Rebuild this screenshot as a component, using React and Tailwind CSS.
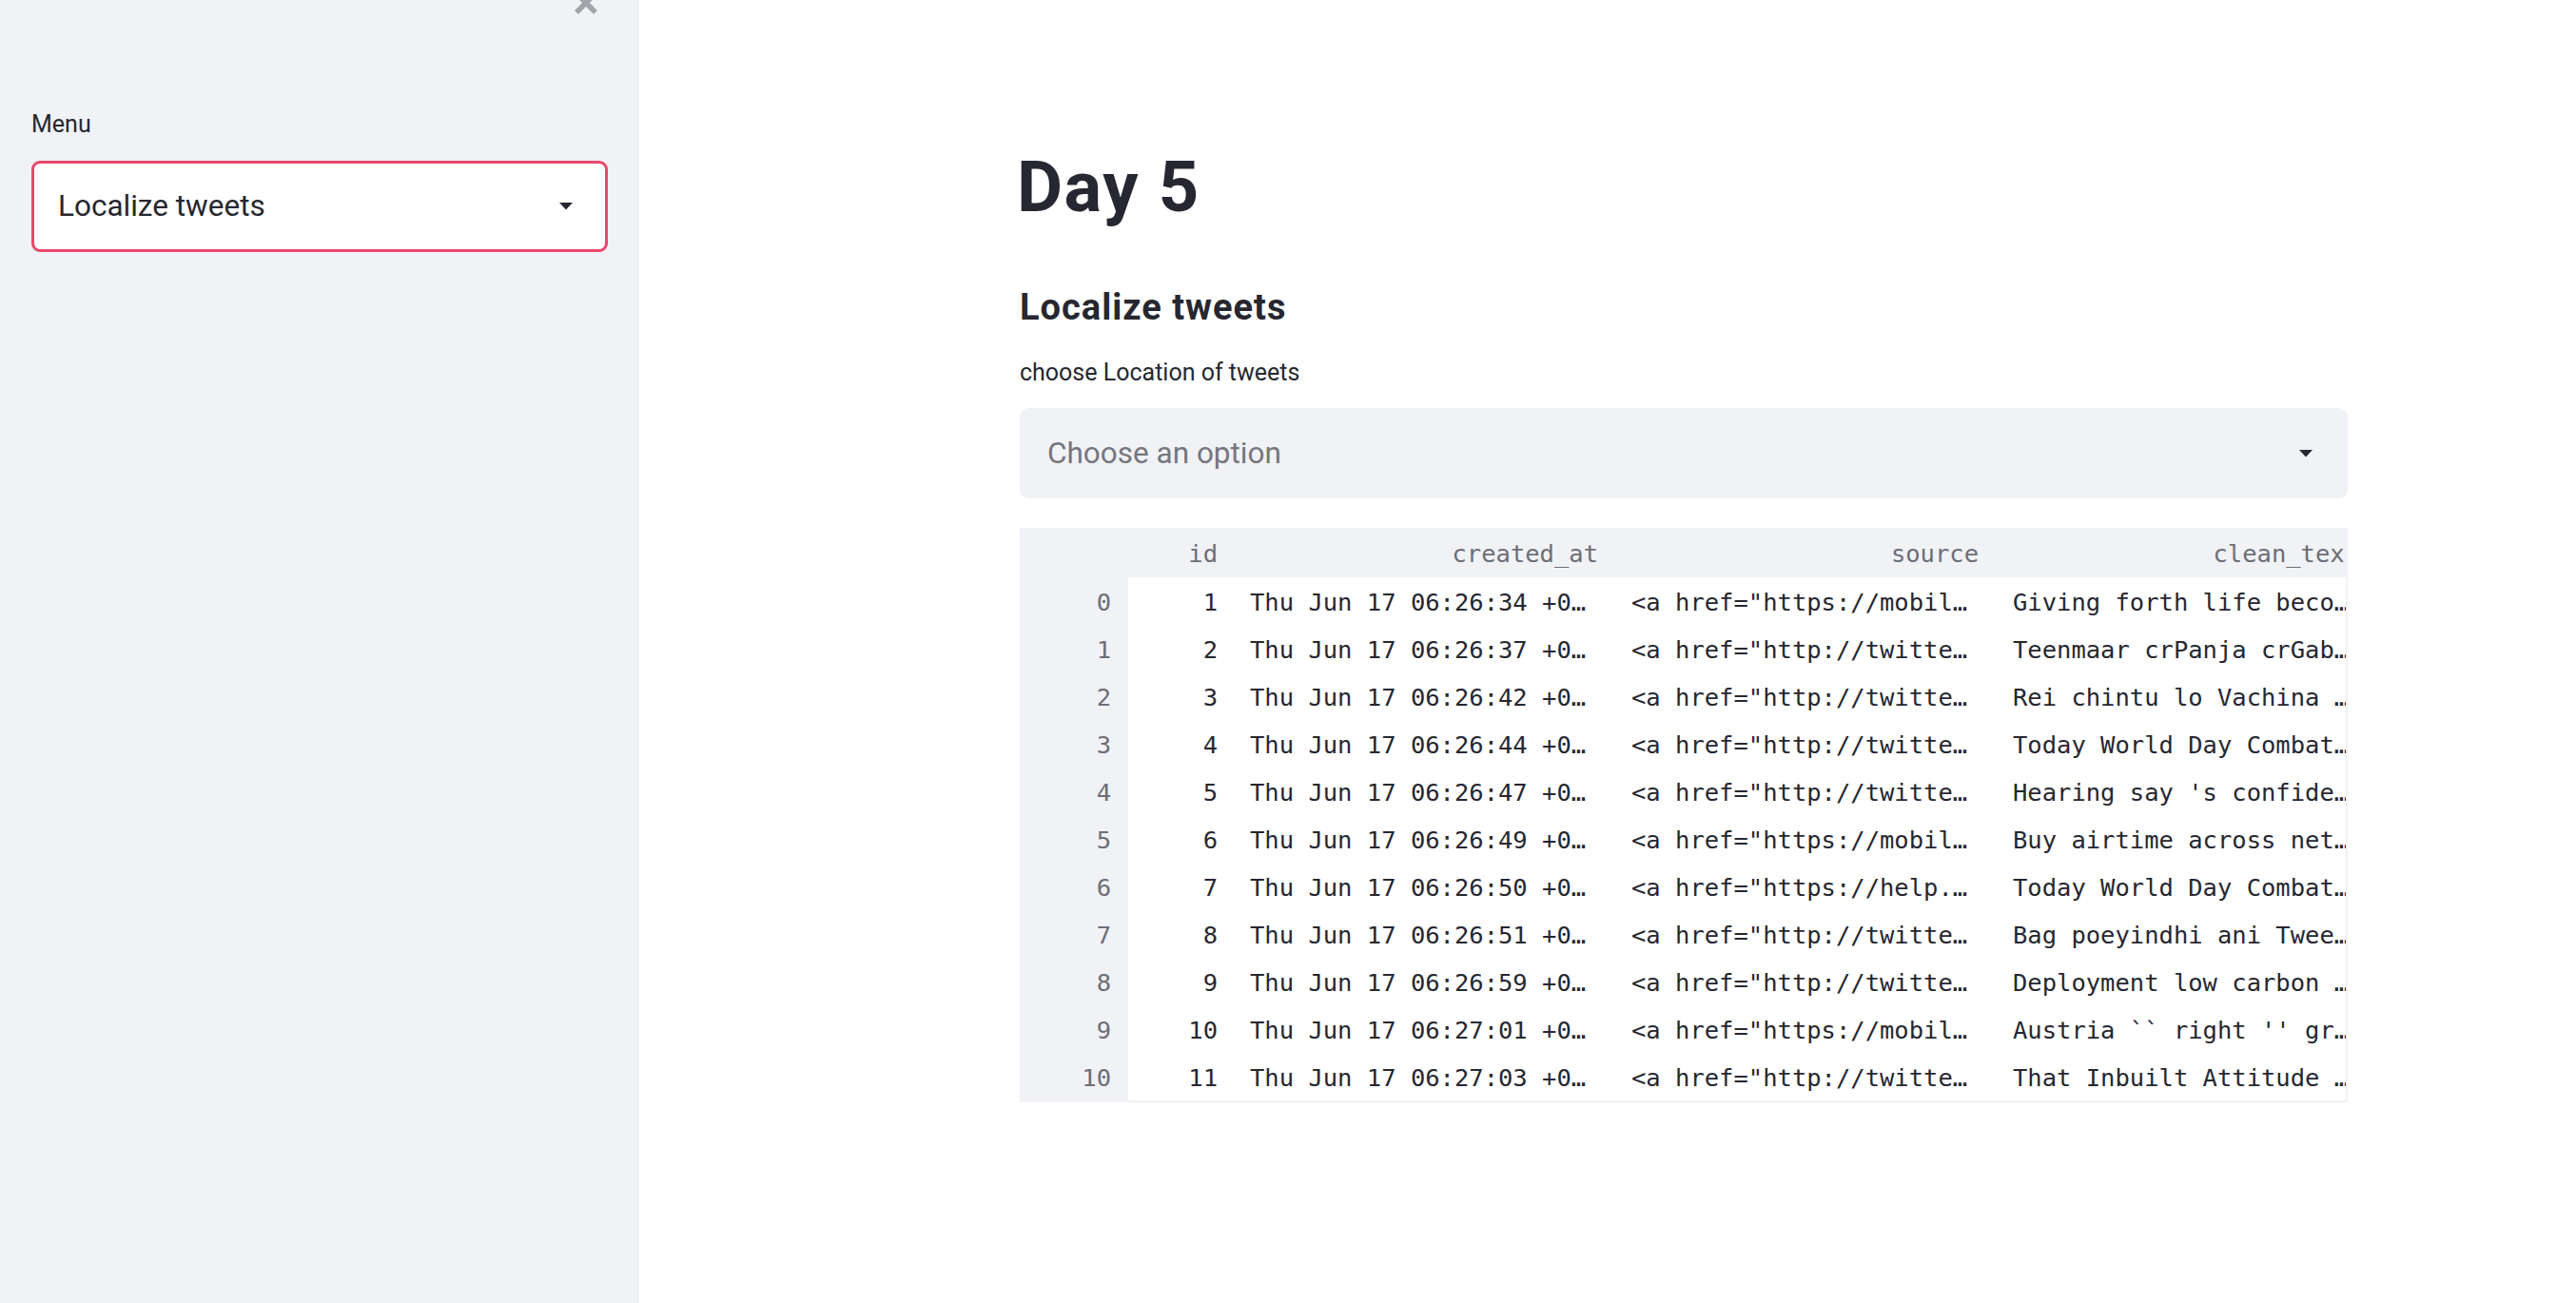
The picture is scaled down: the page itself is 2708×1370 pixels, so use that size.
import React from "react";

const rows = [
  ["0", "1", "Thu Jun 17 06:26:34 +0…", '<a href="https://mobil…', "Giving forth life beco…"],
  ["1", "2", "Thu Jun 17 06:26:37 +0…", '<a href="http://twitte…', "Teenmaar crPanja crGab…"],
  ["2", "3", "Thu Jun 17 06:26:42 +0…", '<a href="http://twitte…', "Rei chintu lo Vachina …"],
  ["3", "4", "Thu Jun 17 06:26:44 +0…", '<a href="http://twitte…', "Today World Day Combat…"],
  ["4", "5", "Thu Jun 17 06:26:47 +0…", '<a href="http://twitte…', "Hearing say 's confide…"],
  ["5", "6", "Thu Jun 17 06:26:49 +0…", '<a href="https://mobil…', "Buy airtime across net…"],
  ["6", "7", "Thu Jun 17 06:26:50 +0…", '<a href="https://help.…', "Today World Day Combat…"],
  ["7", "8", "Thu Jun 17 06:26:51 +0…", '<a href="http://twitte…', "Bag poeyindhi ani Twee…"],
  ["8", "9", "Thu Jun 17 06:26:59 +0…", '<a href="http://twitte…', "Deployment low carbon …"],
  ["9", "10", "Thu Jun 17 06:27:01 +0…", '<a href="https://mobil…', "Austria `` right '' gr…"],
  ["10", "11", "Thu Jun 17 06:27:03 +0…", '<a href="http://twitte…', "That Inbuilt Attitude …"],
];

function Caret() {
  return (
    <svg width="14" height="8" viewBox="0 0 14 8" className="shrink-0">
      <polygon points="0,0 14,0 7,7.5" fill="#262730" />
    </svg>
  );
}

export default function App() {
  return (
    <div className="flex min-h-[1370px] w-[2708px] bg-white text-[#262730] [font-family:Roboto,sans-serif]">
      {/* Sidebar */}
      <aside className="relative w-[672px] shrink-0 bg-[#f0f2f6] px-[33px]">
        <svg
          className="absolute left-[602px] top-[-11px]"
          width="28"
          height="28"
          viewBox="0 0 28 28"
        >
          <path d="M4 4 L24 24 M24 4 L4 24" stroke="#a3a4aa" strokeWidth="5.5" />
        </svg>
        <div className="pt-[115px] text-[25px] leading-[32px]">Menu</div>
        <div className="mt-[22px] flex h-[96px] items-center justify-between rounded-[9px] border-[3px] border-[#e8476a] bg-white pl-[25px] pr-[34px]">
          <span className="text-[31.5px] leading-[40px]">Localize tweets</span>
          <Caret />
        </div>
      </aside>

      {/* Main */}
      <main className="flex-1">
        <div className="ml-[400px] w-[1396px] pt-[154px]">
          <h1 className="ml-[-3px] text-[74px] font-bold leading-[86px] tracking-[1.5px]">Day 5</h1>
          <h3 className="mt-[59px] text-[38px] font-bold leading-[48px] tracking-[1px]">Localize tweets</h3>
          <div className="mt-[29px] text-[25px] leading-[32px]">choose Location of tweets</div>
          <div className="mt-[21px] flex h-[95px] items-center justify-between rounded-[9px] bg-[#f0f2f6] pl-[29px] pr-[37px]">
            <span className="text-[31.5px] leading-[40px] text-[#75767e]">Choose an option</span>
            <Caret />
          </div>

          {/* Dataframe */}
          <div className="mt-[31px] w-[1396px] overflow-hidden border-b-2 border-r-2 border-[#f0f2f6] bg-[#f0f2f6] text-[25.5px] [font-family:'DejaVu_Sans_Mono',monospace]">
            <div className="flex h-[52px] items-center whitespace-nowrap pt-[2px] text-[#6d6e76]">
              <div className="w-[114px] shrink-0" />
              <div className="w-[111px] shrink-0 pr-[17px] text-right">id</div>
              <div className="w-[400px] shrink-0 pr-[17px] text-right">created_at</div>
              <div className="w-[400px] shrink-0 pr-[17px] text-right">source</div>
              <div className="w-[400px] shrink-0 pr-[17px] text-right">clean_text</div>
            </div>
            {rows.map((r) => (
              <div key={r[0]} className="flex h-[50px] whitespace-nowrap">
                <div className="flex w-[114px] shrink-0 items-center justify-end bg-[#f0f2f6] pr-[18px] pt-[2px] text-[#6d6e76]">
                  {r[0]}
                </div>
                <div className="flex flex-1 bg-white pt-[2px]">
                  <div className="flex w-[111px] shrink-0 items-center justify-end pr-[17px]">{r[1]}</div>
                  <div className="flex w-[400px] shrink-0 items-center pl-[17px]">{r[2]}</div>
                  <div className="flex w-[400px] shrink-0 items-center pl-[18px]">{r[3]}</div>
                  <div className="flex w-[400px] shrink-0 items-center pl-[19px]">{r[4]}</div>
                </div>
              </div>
            ))}
          </div>
        </div>
      </main>
    </div>
  );
}
